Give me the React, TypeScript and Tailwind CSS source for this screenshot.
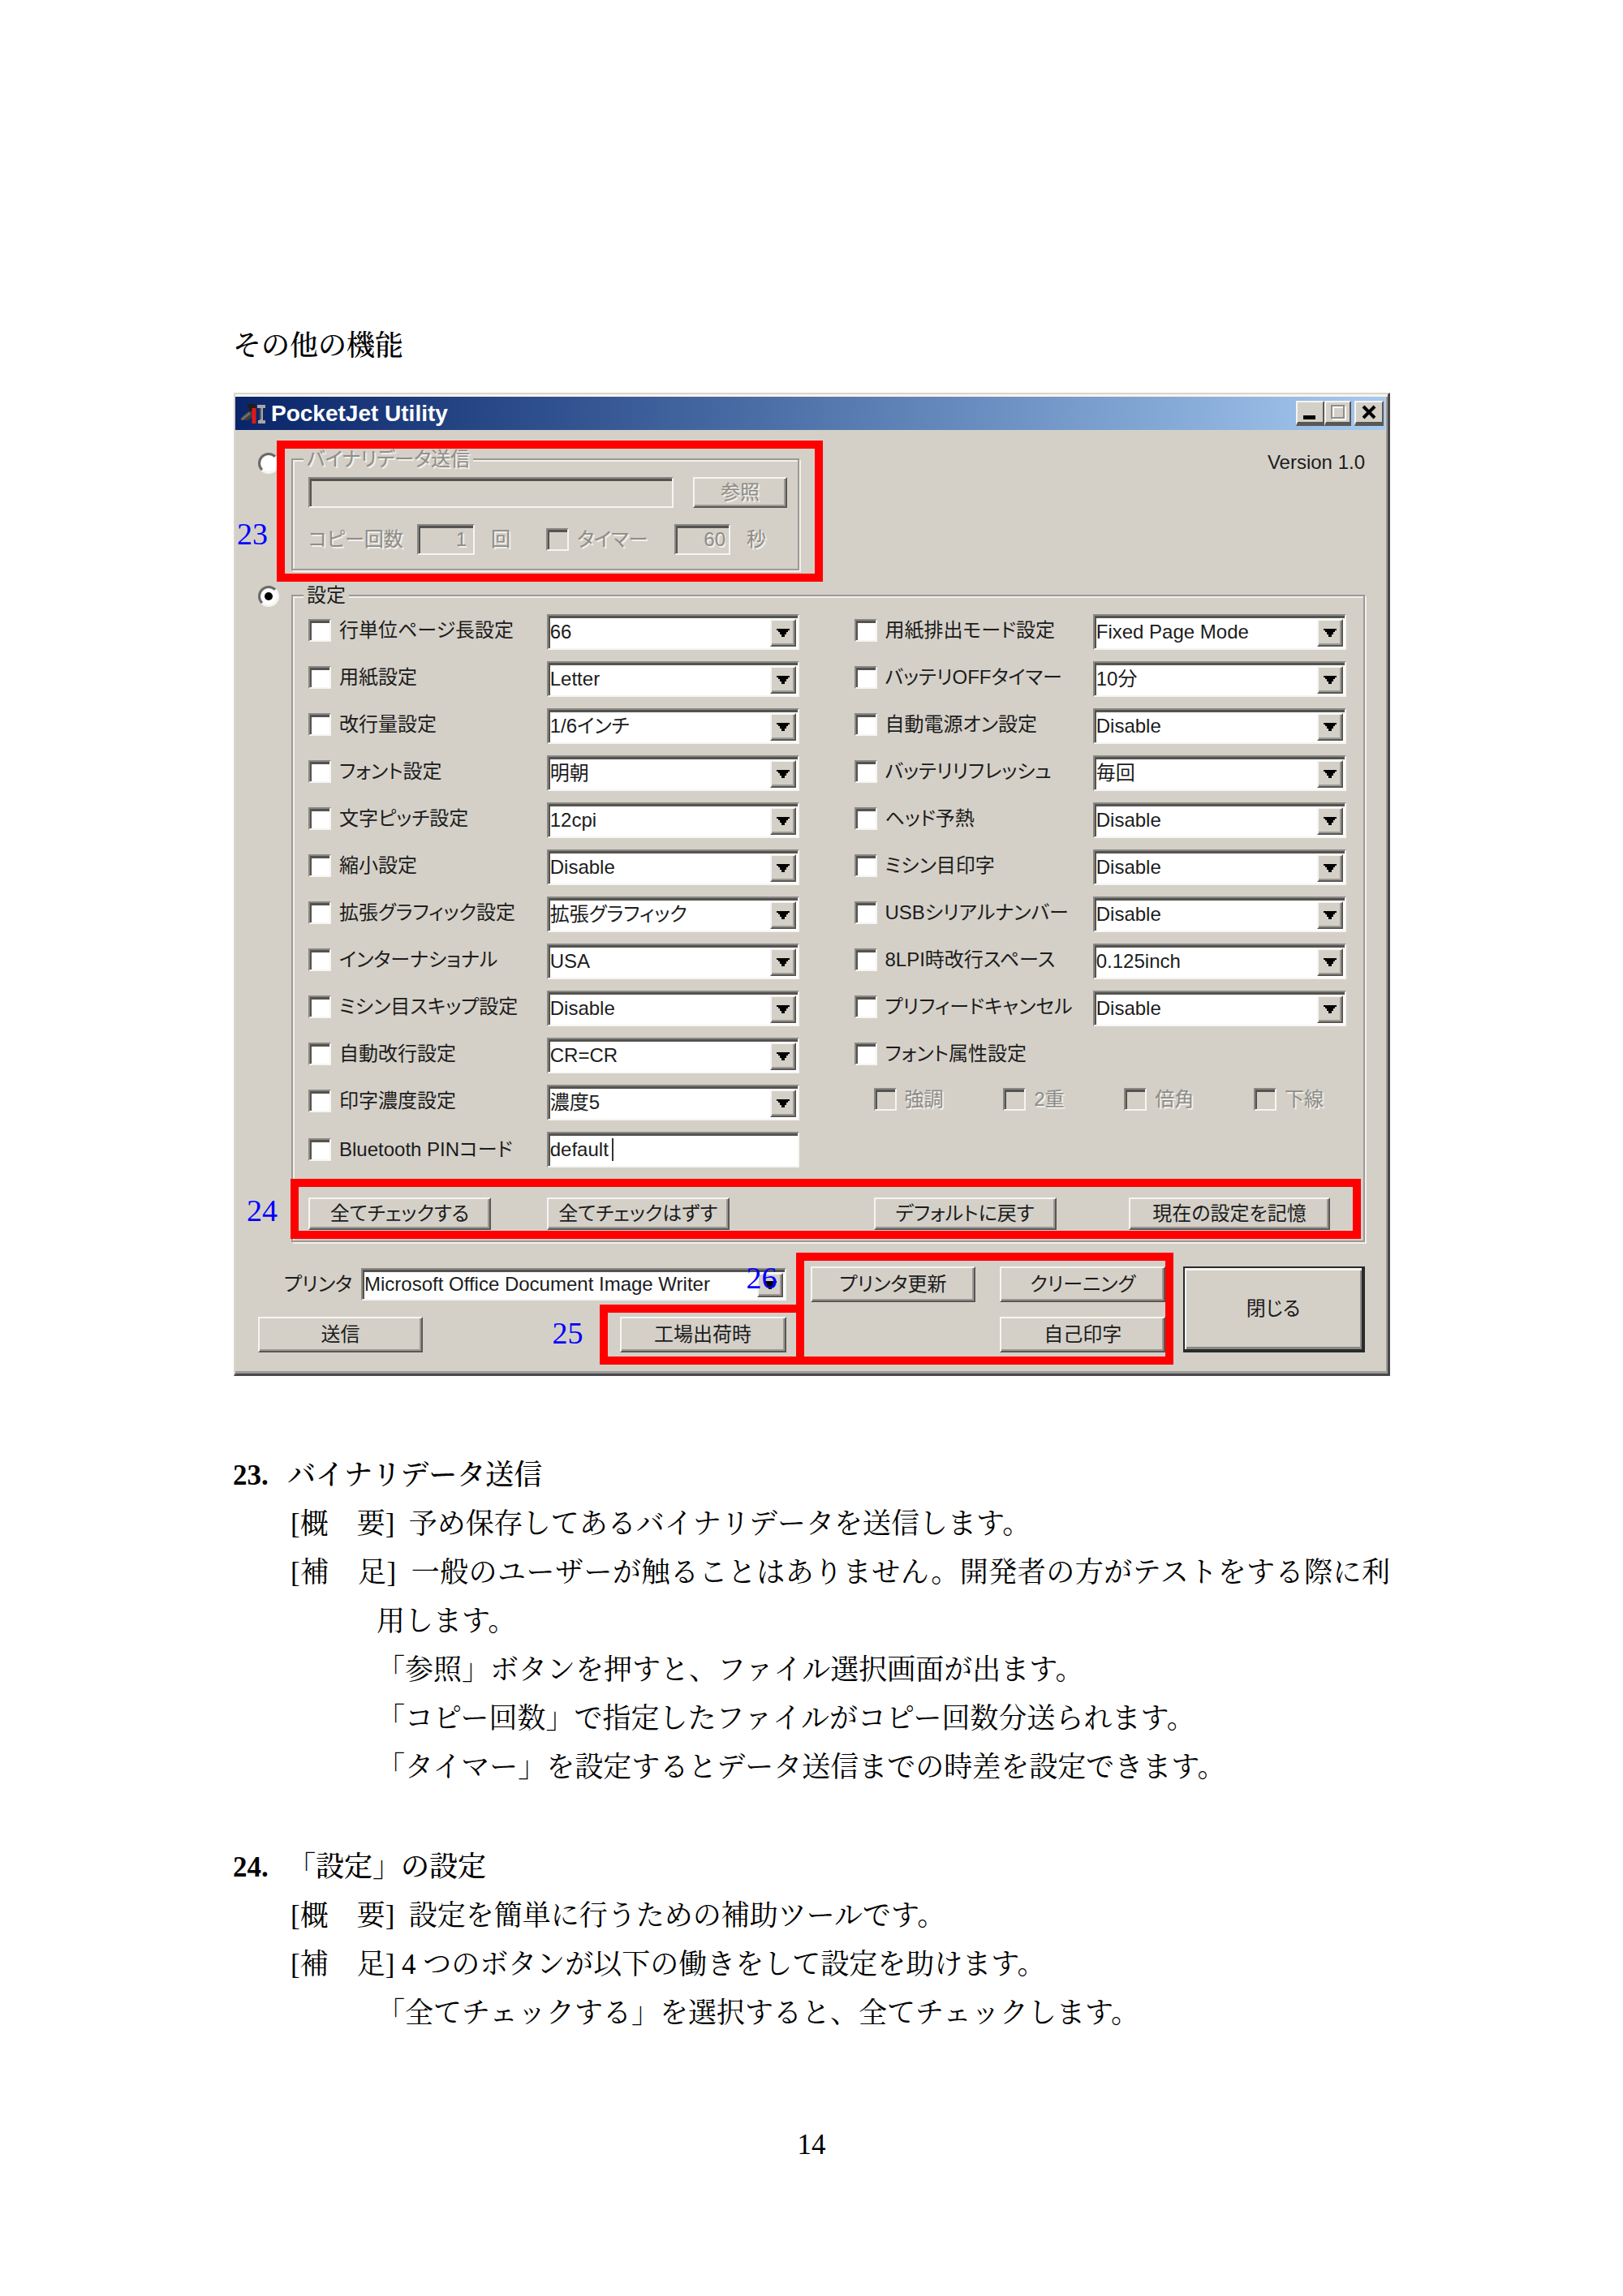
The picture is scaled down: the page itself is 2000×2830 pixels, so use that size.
import React from "react";

const serif = "font-['Liberation_Serif','Noto_Serif_CJK_JP','Noto_Sans_CJK_JP',serif]";
const dim = "text-[#8f8d88] [text-shadow:2px_2px_0_#f2f0ec]";
const sunken =
  "border-2 border-t-[#8a8884] border-l-[#8a8884] border-r-[#f6f5f2] border-b-[#f6f5f2] shadow-[inset_2px_3px_0_#55534f]";
const raised =
  "bg-[#d4d0c8] border-2 border-t-[#f6f5f2] border-l-[#f6f5f2] border-r-[#5a5855] border-b-[#5a5855] shadow-[inset_-2px_-2px_0_#9c9994]";

function Check({ label, disabled = false }: { label: string; disabled?: boolean }) {
  return (
    <label className={`flex items-center gap-2.5 whitespace-nowrap ${disabled ? dim : ""}`}>
      <input
        type="checkbox"
        disabled={disabled}
        className={`size-7 shrink-0 appearance-none ${sunken} ${disabled ? "bg-[#d4d0c8]" : "bg-white"}`}
      />
      <span>{label}</span>
    </label>
  );
}

function Combo({ value, label, height = "h-11" }: { value: string; label: string; height?: string }) {
  return (
    <div className="relative w-full">
      <select
        aria-label={label}
        defaultValue={value}
        className={`block w-full appearance-none bg-white pl-0.5 leading-8 ${height} ${sunken}`}
      >
        <option>{value}</option>
      </select>
      <span
        className={`pointer-events-none absolute top-1.5 right-1 bottom-1 flex w-8 items-center justify-center ${raised}`}
      >
        <svg viewBox="0 0 16 10" className="h-2.5 w-4" aria-hidden="true">
          <path d="M0 0h16v2h-2v2h-2v3h-2v3H6V7H4V4H2V2H0z" fill="#000" />
        </svg>
      </span>
    </div>
  );
}

function Push({ children, className = "" }: { children: React.ReactNode; className?: string }) {
  return (
    <button type="button" className={`flex items-center justify-center whitespace-nowrap leading-6 ${raised} ${className}`}>
      {children}
    </button>
  );
}

function Mark({ className }: { className: string }) {
  return <div className={`pointer-events-none absolute border-10 border-[#ff0000] ${className}`} />;
}

function Callout({ n, className }: { n: number; className: string }) {
  return <span className={`absolute text-[38px] leading-10 text-[#0000ff] ${serif} ${className}`}>{n}</span>;
}

const radio =
  "size-[26px] shrink-0 appearance-none rounded-full border-3 border-t-[#6b6966] border-l-[#6b6966] border-r-[#f6f5f2] border-b-[#f6f5f2] bg-white";
const group =
  "min-w-0 border-2 border-[#9c9a96] shadow-[inset_2px_2px_0_#f2f0ec,2px_2px_0_#f2f0ec]";
const legend = "-ml-1.5 bg-[#d4d0c8] px-1 leading-6";

const left: [string, string][] = [
  ["行単位ページ長設定", "66"],
  ["用紙設定", "Letter"],
  ["改行量設定", "1/6インチ"],
  ["フォント設定", "明朝"],
  ["文字ピッチ設定", "12cpi"],
  ["縮小設定", "Disable"],
  ["拡張グラフィック設定", "拡張グラフィック"],
  ["インターナショナル", "USA"],
  ["ミシン目スキップ設定", "Disable"],
  ["自動改行設定", "CR=CR"],
  ["印字濃度設定", "濃度5"],
];

const right: [string, string][] = [
  ["用紙排出モード設定", "Fixed Page Mode"],
  ["バッテリOFFタイマー", "10分"],
  ["自動電源オン設定", "Disable"],
  ["バッテリリフレッシュ", "毎回"],
  ["ヘッド予熱", "Disable"],
  ["ミシン目印字", "Disable"],
  ["USBシリアルナンバー", "Disable"],
  ["8LPI時改行スペース", "0.125inch"],
  ["プリフィードキャンセル", "Disable"],
];

function SettingRow({ label, value }: { label: string; value: string }) {
  return (
    <div className="grid h-[58px] grid-cols-[minmax(0,294fr)_minmax(0,312fr)] items-center">
      <div className="pb-1">
        <Check label={label} />
      </div>
      <Combo value={value} label={label} />
    </div>
  );
}

function TitleBar() {
  const cap = "flex h-[31px] items-center justify-center";
  const edge =
    "bg-[#d4d0c8] border-2 border-b-5 border-t-[#f6f5f2] border-l-[#f6f5f2] border-r-[#5a5855] border-b-[#5a5855]";
  return (
    <div className="flex h-[41px] items-center bg-linear-to-r from-[#0a246a] to-[#a6caf0] pr-0.5 pl-1.5">
      <svg viewBox="0 0 32 26" className="h-[26px] w-8" aria-hidden="true">
        <path d="M0 20l5-6 8-6 3 3v5l-6 5H0z" fill="#3d3d3d" />
        <path d="M9 1h10v5h-4v4h-4V6H9z" fill="#1e1e1e" />
        <path d="M2 20l10-8" stroke="#6d6d6d" strokeWidth="3" />
        <path d="M17 6v19" stroke="#e01818" strokeWidth="5" />
        <path d="M21 2h10v4h-3v15h3v4h-9v-4h2V6h-3z" fill="#a9a7a6" />
        <path d="M25 6v14" stroke="#5c5c5c" strokeWidth="2" />
      </svg>
      <h2 className="ml-1.5 flex-1 text-[28px] leading-8 font-bold text-white">PocketJet Utility</h2>
      <div className="flex">
        <button type="button" aria-label="最小化" className={`${cap} w-[35px] ${edge}`}>
          <svg viewBox="0 0 20 20" className="size-5" aria-hidden="true">
            <path d="M1 14h15v5H1z" fill="#000" />
          </svg>
        </button>
        <button type="button" aria-label="最大化" disabled className={`${cap} w-[33px] ${edge}`}>
          <svg viewBox="0 0 20 20" className="size-5" aria-hidden="true">
            <path d="M4 4h15v15H4z" fill="none" stroke="#fff" strokeWidth="2" />
            <path d="M2 2h15v15H2z" fill="none" stroke="#908e8a" strokeWidth="2" />
          </svg>
        </button>
        <button type="button" aria-label="閉じる" className={`${cap} ml-1 w-9 ${edge}`}>
          <svg viewBox="0 0 20 20" className="size-5" aria-hidden="true">
            <path d="M3 3l14 14M17 3L3 17" stroke="#000" strokeWidth="4" />
          </svg>
        </button>
      </div>
    </div>
  );
}

function UtilityWindow() {
  return (
    <section className="ml-px border-t-2 border-r-3 border-b-3 border-l-2 border-t-[#dad6ce] border-r-[#48474a] border-b-[#48474a] border-l-[#dad6ce] bg-[#d4d0c8] pt-[3px] pr-[3px] text-2xl text-[#1c1c1c] shadow-[inset_0_3px_0_#f8f4ec,inset_-2px_-3px_0_#9c9a96] font-['Liberation_Sans','Noto_Sans_CJK_JP',sans-serif] [font-feature-settings:'palt']">
      <TitleBar />
      <div className="pt-6 pr-[25px] pb-[26px] pl-7">
        <div className="flex items-start">
          <input type="radio" name="mode" aria-label="バイナリデータ送信" className={`mt-1 mr-[15px] ${radio}`} />
          <div className="grid flex-1 grid-cols-[minmax(0,626fr)_minmax(0,697fr)] items-start">
            <div className="relative">
              <fieldset disabled className={`px-[19px] pb-[17px] ${group}`}>
                <legend className={`${legend} ${dim}`}>バイナリデータ送信</legend>
                <div className="-mr-1.5 flex gap-6 pt-2.5">
                  <input aria-label="ファイル" className={`h-[38px] min-w-0 flex-1 ${sunken}`} />
                  <Push className={`h-[38px] w-[116px] ${dim}`}>参照</Push>
                </div>
                <div className="mt-5 flex items-center">
                  <label htmlFor="copies" className={`w-[134px] ${dim}`}>コピー回数</label>
                  <input id="copies" defaultValue="1" className={`h-[38px] w-[71px] pr-2 text-right leading-6 ${sunken} ${dim}`} />
                  <span className={`ml-5 w-[68px] ${dim}`}>回</span>
                  <Check label="タイマー" disabled />
                  <input aria-label="秒数" defaultValue="60" className={`ml-auto h-[38px] w-[69px] pr-1 text-right leading-6 ${sunken} ${dim}`} />
                  <span className={`mr-5 ml-5 ${dim}`}>秒</span>
                </div>
              </fieldset>
              <Mark className="-top-[11px] -right-[29px] -bottom-3.5 -left-[18px]" />
              <Callout n={23} className="top-[84px] -left-[67px]" />
            </div>
            <p className="text-right leading-8">Version 1.0</p>
          </div>
        </div>

        <div className="mt-[19px] flex items-start">
          <span className="relative mr-[15px] flex">
            <input type="radio" name="mode" defaultChecked aria-label="設定" className={radio} />
            <span className="pointer-events-none absolute inset-0 m-auto size-2.5 rounded-full bg-black" />
          </span>
          <fieldset className={`flex-1 pr-[21px] pb-[13px] pl-[19px] ${group}`}>
            <legend className={legend}>設定</legend>
            <div className="grid grid-cols-[minmax(0,606fr)_minmax(0,607fr)] gap-x-[67px] pt-1">
              <div>
                {left.map(([l, v]) => (
                  <SettingRow key={l} label={l} value={v} />
                ))}
                <div className="grid h-[58px] grid-cols-[minmax(0,294fr)_minmax(0,312fr)] items-center">
                  <Check label="Bluetooth PINコード" />
                  <div className="relative">
                    <input aria-label="PINコード" defaultValue="default" className={`block h-11 w-full bg-white pl-0.5 leading-8 ${sunken}`} />
                    <span className="absolute top-2 left-20 h-7 w-0.5 bg-[#333]" />
                  </div>
                </div>
              </div>
              <div>
                {right.map(([l, v]) => (
                  <SettingRow key={l} label={l} value={v} />
                ))}
                <div className="flex h-[58px] items-center pb-1">
                  <Check label="フォント属性設定" />
                </div>
                <div className="flex h-[58px] items-center justify-between pr-7 pb-2 pl-6">
                  <Check label="強調" disabled />
                  <Check label="2重" disabled />
                  <Check label="倍角" disabled />
                  <Check label="下線" disabled />
                </div>
              </div>
            </div>
            <div className="relative mt-[30px] grid grid-cols-[minmax(0,606fr)_minmax(0,607fr)] gap-x-[67px]">
              <div className="grid grid-cols-[minmax(0,294fr)_minmax(0,312fr)]">
                <Push className="h-10 w-[225px]">全てチェックする</Push>
                <Push className="h-10 w-[225px]">全てチェックはずす</Push>
              </div>
              <div className="flex justify-between pr-5 pl-6">
                <Push className="h-10 w-[225px]">デフォルトに戻す</Push>
                <Push className="h-10 w-[248px]">現在の設定を記憶</Push>
              </div>
              <Mark className="-top-[23px] -right-[18px] -bottom-[11px] -left-[22px]" />
              <Callout n={24} className="-top-1 -left-[76px]" />
            </div>
          </fieldset>
        </div>

        <div className="mt-[30px] flex">
          <div className="flex flex-[651] flex-col gap-[18px]">
            <div className="flex h-11 items-center pl-8">
              <span className="w-[95px]">プリンタ</span>
              <div className="flex-1">
                <Combo value="Microsoft Office Document Image Writer" label="プリンタ" height="h-10" />
              </div>
            </div>
            <div className="flex justify-between">
              <Push className="h-11 w-[203px]">送信</Push>
              <div className="relative">
                <Push className="h-11 w-[205px]">工場出荷時</Push>
                <Mark className="-top-[15px] -right-[22px] -bottom-[15px] -left-[25px]" />
                <Callout n={25} className="top-0 -left-[83px]" />
              </div>
            </div>
          </div>
          <div className="relative ml-[30px] grid flex-[438] grid-cols-2 gap-x-[30px] gap-y-[18px]">
            <Push className="h-11">プリンタ更新</Push>
            <Push className="h-11">クリーニング</Push>
            <Push className="col-start-2 h-11">自己印字</Push>
            <Mark className="-top-[17px] -right-2.5 -bottom-[15px] -left-[18px]" />
            <Callout n={26} className="-top-1.5 -left-[79px]" />
          </div>
          <div className="ml-[22px] flex flex-[224]">
            <button
              type="button"
              className="flex-1 border-2 border-r-4 border-b-4 border-[#2a2a2a] bg-[#d4d0c8] shadow-[inset_2px_3px_0_#f6f5f2,inset_-2px_-3px_0_#8a8884]"
            >
              閉じる
            </button>
          </div>
        </div>
      </div>
    </section>
  );
}

function Head({ n, children }: { n: string; children: React.ReactNode }) {
  return (
    <h3 className="flex font-medium">
      <span className="w-[67px] font-bold">{n}</span>
      <span>{children}</span>
    </h3>
  );
}

function Item({ text }: { text: string }) {
  return <p className="pl-[177px] -indent-[106px] text-justify">{text}</p>;
}

export default function App() {
  return (
    <main className={`min-h-screen bg-white px-6 pt-[397px] pb-[157px] text-[35px] leading-[60px] text-black ${serif}`}>
      <div className="mx-auto w-full max-w-[1426px]">
        <h1 className="mb-[27px] font-medium">その他の機能</h1>
        <UtilityWindow />
        <article className="mt-[93px]">
          <Head n="23.">バイナリデータ送信</Head>
          <Item text={"[概　要]\u00a0\u00a0予め保存してあるバイナリデータを送信します。"} />
          <Item
            text={"[補　足]\u00a0\u00a0一般のユーザーが触ることはありません。開発者の方がテストをする際に利用します。"}
          />
          <div className="pl-[177px]">
            <p>「参照」ボタンを押すと、ファイル選択画面が出ます。</p>
            <p>「コピー回数」で指定したファイルがコピー回数分送られます。</p>
            <p>「タイマー」を設定するとデータ送信までの時差を設定できます。</p>
          </div>
        </article>
        <article className="mt-[63px]">
          <Head n="24.">「設定」の設定</Head>
          <Item text={"[概　要]\u00a0\u00a0設定を簡単に行うための補助ツールです。"} />
          <Item text={"[補　足]\u00a04 つのボタンが以下の働きをして設定を助けます。"} />
          <p className="pl-[177px]">「全てチェックする」を選択すると、全てチェックします。</p>
        </article>
      </div>
      <footer className="mt-[102px] text-center">14</footer>
    </main>
  );
}
